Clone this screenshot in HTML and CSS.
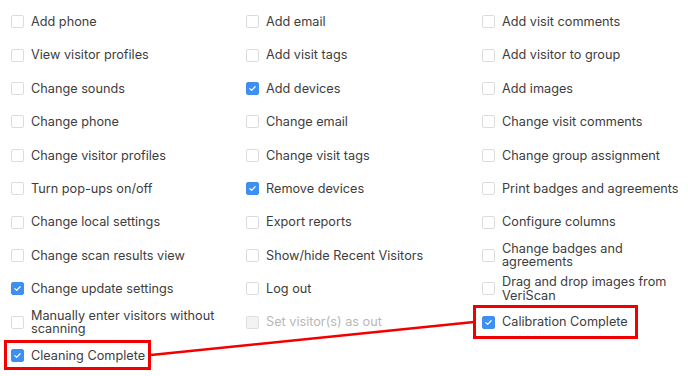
FILE: index.html
```html
<!DOCTYPE html>
<html>
<head>
<meta charset="utf-8">
<link rel="stylesheet" href="styles.css">
</head>
<body>
<div class="page">
  <div class="perm-grid">
    <label class="item"><span class="box"></span><span class="txt">Add phone</span></label>
    <label class="item"><span class="box"></span><span class="txt">Add email</span></label>
    <label class="item"><span class="box"></span><span class="txt">Add visit comments</span></label>

    <label class="item"><span class="box"></span><span class="txt">View visitor profiles</span></label>
    <label class="item"><span class="box"></span><span class="txt">Add visit tags</span></label>
    <label class="item"><span class="box"></span><span class="txt">Add visitor to group</span></label>

    <label class="item"><span class="box"></span><span class="txt">Change sounds</span></label>
    <label class="item"><span class="box checked"><svg viewBox="0 0 13 13"><path d="M3.3 6.6 L5.5 8.7 L9.6 4.4"/></svg></span><span class="txt">Add devices</span></label>
    <label class="item"><span class="box"></span><span class="txt">Add images</span></label>

    <label class="item"><span class="box"></span><span class="txt">Change phone</span></label>
    <label class="item"><span class="box"></span><span class="txt">Change email</span></label>
    <label class="item"><span class="box"></span><span class="txt">Change visit comments</span></label>

    <label class="item"><span class="box"></span><span class="txt">Change visitor profiles</span></label>
    <label class="item"><span class="box"></span><span class="txt">Change visit tags</span></label>
    <label class="item"><span class="box"></span><span class="txt">Change group assignment</span></label>

    <label class="item"><span class="box"></span><span class="txt">Turn pop-ups on/off</span></label>
    <label class="item"><span class="box checked"><svg viewBox="0 0 13 13"><path d="M3.3 6.6 L5.5 8.7 L9.6 4.4"/></svg></span><span class="txt">Remove devices</span></label>
    <label class="item"><span class="box"></span><span class="txt">Print badges and agreements</span></label>

    <label class="item"><span class="box"></span><span class="txt">Change local settings</span></label>
    <label class="item"><span class="box"></span><span class="txt">Export reports</span></label>
    <label class="item"><span class="box"></span><span class="txt">Configure columns</span></label>

    <label class="item"><span class="box"></span><span class="txt">Change scan results view</span></label>
    <label class="item"><span class="box"></span><span class="txt">Show/hide Recent Visitors</span></label>
    <label class="item"><span class="box"></span><span class="txt narrow">Change badges and agreements</span></label>

    <label class="item"><span class="box checked"><svg viewBox="0 0 13 13"><path d="M3.3 6.6 L5.5 8.7 L9.6 4.4"/></svg></span><span class="txt">Change update settings</span></label>
    <label class="item"><span class="box"></span><span class="txt">Log out</span></label>
    <label class="item"><span class="box"></span><span class="txt narrow">Drag and drop images from VeriScan</span></label>

    <label class="item"><span class="box"></span><span class="txt wrap1">Manually enter visitors without scanning</span></label>
    <label class="item disabled"><span class="box"></span><span class="txt">Set visitor(s) as out</span></label>
    <label class="item"><span class="box checked"><svg viewBox="0 0 13 13"><path d="M3.3 6.6 L5.5 8.7 L9.6 4.4"/></svg></span><span class="txt">Calibration Complete</span></label>

    <label class="item"><span class="box checked"><svg viewBox="0 0 13 13"><path d="M3.3 6.6 L5.5 8.7 L9.6 4.4"/></svg></span><span class="txt">Cleaning Complete</span></label>
  </div>

  <svg class="annot" width="688" height="376" viewBox="0 0 688 376">
    <rect x="5.5" y="341.5" width="144" height="27" />
    <rect x="474.5" y="306.5" width="162" height="31" />
    <line x1="151" y1="355" x2="474" y2="322" />
  </svg>
</div>
</body>
</html>
```

FILE: styles.css
```css
html, body {
  margin: 0;
  padding: 0;
  background: #ffffff;
}

body {
  font-family: Inter, "Noto Sans", "Liberation Sans", sans-serif;
  font-size: 12.7px;
  color: #3d3d3d;
}

.page {
  position: relative;
  width: 688px;
  height: 376px;
  overflow: hidden;
}

.perm-grid {
  display: grid;
  grid-template-columns: 235px 236px 1fr;
  grid-auto-rows: 33.4px;
  padding: 5px 0 0 11px;
}

.item {
  display: flex;
  align-items: center;
  gap: 7px;
}

.box {
  flex: none;
  width: 13px;
  height: 13px;
  box-sizing: border-box;
  border: 1px solid #dcdcdc;
  border-radius: 2px;
  background: #ffffff;
  display: flex;
  align-items: center;
  justify-content: center;
}

.box svg {
  width: 13px;
  height: 13px;
}

.box svg path {
  fill: none;
  stroke: #ffffff;
  stroke-width: 1.4;
  stroke-linecap: round;
  stroke-linejoin: round;
}

.box.checked {
  background: #3d8ff2;
  border-color: #3d8ff2;
}

.txt {
  line-height: 13.5px;
  max-width: 205px;
}

.txt.narrow {
  max-width: 180px;
}

.txt.wrap1 {
  max-width: 192px;
}

.item.disabled .txt {
  color: #b8b8b8;
}

.item.disabled .box {
  background: #f3f3f3;
  border-color: #dedede;
}

.annot {
  position: absolute;
  left: 0;
  top: 0;
  pointer-events: none;
}

.annot rect {
  fill: none;
  stroke: #f20000;
  stroke-width: 3;
}

.annot line {
  stroke: #f20000;
  stroke-width: 2.5;
}
```
